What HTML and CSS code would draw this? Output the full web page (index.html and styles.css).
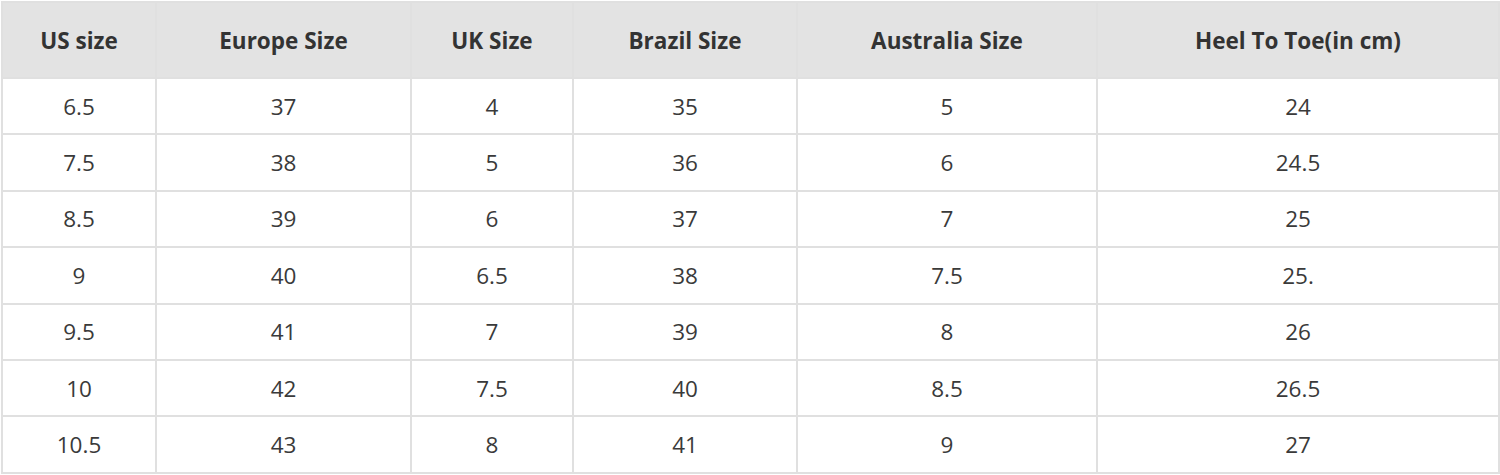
FILE: index.html
```html
<!DOCTYPE html>
<html lang="en">
<head>
<meta charset="utf-8">
<title>Size Chart</title>
<link rel="stylesheet" href="styles.css">
</head>
<body>
<div class="wrap">
<table class="chart">
  <colgroup>
    <col class="c1"><col class="c2"><col class="c3"><col class="c4"><col class="c5"><col class="c6">
  </colgroup>
  <thead>
    <tr><th>US size</th><th>Europe Size</th><th>UK Size</th><th>Brazil Size</th><th>Australia Size</th><th>Heel To Toe(in cm)</th></tr>
  </thead>
  <tbody>
    <tr><td>6.5</td><td>37</td><td>4</td><td>35</td><td>5</td><td>24</td></tr>
    <tr><td>7.5</td><td>38</td><td>5</td><td>36</td><td>6</td><td>24.5</td></tr>
    <tr><td>8.5</td><td>39</td><td>6</td><td>37</td><td>7</td><td>25</td></tr>
    <tr><td>9</td><td>40</td><td>6.5</td><td>38</td><td>7.5</td><td>25.</td></tr>
    <tr><td>9.5</td><td>41</td><td>7</td><td>39</td><td>8</td><td>26</td></tr>
    <tr><td>10</td><td>42</td><td>7.5</td><td>40</td><td>8.5</td><td>26.5</td></tr>
    <tr><td>10.5</td><td>43</td><td>8</td><td>41</td><td>9</td><td>27</td></tr>
  </tbody>
</table>
</div>
</body>
</html>
```
FILE: styles.css
```css
html, body {
  margin: 0;
  padding: 0;
  background: #ffffff;
}
.wrap {
  padding: 1px 2px 0 1px;
}
.chart {
  border-collapse: collapse;
  table-layout: fixed;
  width: 1497px;
  font-family: "Open Sans", "Liberation Sans", sans-serif;
  color: #3a3a3a;
}
.c1 { width: 154px; }
.c2 { width: 255px; }
.c3 { width: 162px; }
.c4 { width: 224px; }
.c5 { width: 300px; }
.c6 { width: 402px; }
.chart th,
.chart td {
  border: 2px solid #e0e0e0;
  text-align: center;
  vertical-align: middle;
  padding: 0;
}
.chart th {
  background: #e3e3e3;
  height: 74px;
  font-size: 22.5px;
  font-weight: 700;
  color: #333333;
}
.chart td {
  height: 54.4px;
  font-size: 22.5px;
  font-weight: 400;
}
```
